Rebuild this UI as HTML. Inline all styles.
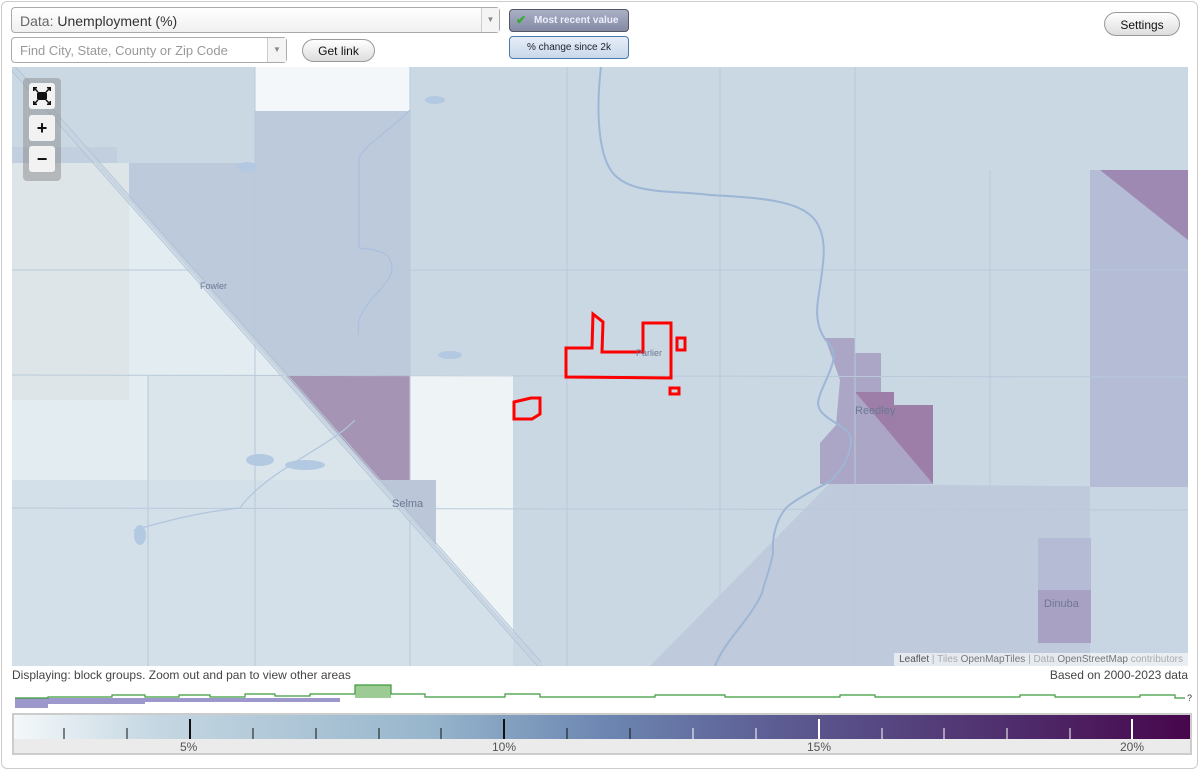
<!DOCTYPE html>
<html><head><meta charset="utf-8"><style>
*{box-sizing:border-box}
body{margin:0;width:1200px;height:771px;background:#fff;font-family:"Liberation Sans",Arial,sans-serif;overflow:hidden}
.frame{position:absolute;left:1px;top:1px;width:1197px;height:768px;border:1px solid #ccc;border-radius:6px}
.sel{position:absolute;left:11px;top:7px;width:489px;height:26px;border:1px solid #aaa;border-radius:4px;background:linear-gradient(#fff,#f0f0f0);font-size:14px;color:#333;padding:5px 8px}
.sel .lab{color:#666}
.arr{position:absolute;right:0;top:0;width:18px;height:100%;border-left:1px solid #ccc;color:#888;font-size:8px;text-align:center;line-height:24px;background:#f4f4f4}
.find{position:absolute;left:11px;top:37px;width:276px;height:26px;border:1px solid #aaa;border-radius:4px;background:#fff;font-size:13px;color:#999;padding:5px 8px}
.btn{position:absolute;border:1px solid #999;border-radius:12px;background:linear-gradient(#fff,#ddd);font-size:12px;color:#111;text-align:center}
.t1{position:absolute;left:509px;top:9px;width:120px;height:23px;border:1px solid #556;border-radius:4px;background:linear-gradient(#aab0c4,#838aa3);color:#eef;font-size:10px;font-weight:bold;padding:5px 0 0 24px}
.t2{position:absolute;left:509px;top:36px;width:120px;height:23px;border:1px solid #4a7ab0;border-radius:4px;background:linear-gradient(#e6eef8,#c9d8ea);color:#223;font-size:10px;text-align:center;padding-top:5px}
.map{position:absolute;left:12px;top:67px;width:1176px;height:599px;overflow:hidden;background:#cad8e4}
.zc{position:absolute;left:11px;top:11px;width:38px;height:103px;background:rgba(140,140,140,.5);border-radius:4px}
.zb{position:absolute;left:6px;width:26px;height:26px;background:#f2f2f2;border-radius:3px;font-weight:bold;text-align:center;font-size:18px;line-height:26px;color:#111}
.attr{position:absolute;right:0;bottom:0;background:rgba(255,255,255,.6);font-size:10px;color:#aaa;padding:1px 5px}
.attr b{color:#777;font-weight:normal}
</style></head><body>
<div class="frame"></div>
<div class="sel"><span class="lab">Data: </span>Unemployment (%)<div class="arr">▼</div></div>
<div class="find">Find City, State, County or Zip Code<div class="arr" style="width:19px">▼</div></div>
<div class="btn" style="left:302px;top:39px;width:73px;height:23px;padding-top:4px">Get link</div>
<div class="t1"><span style="position:absolute;left:6px;top:3px;color:#3a3;font-size:12px">✔</span>Most recent value</div>
<div class="t2">% change since 2k</div>
<div class="btn" style="left:1104px;top:12px;width:76px;height:24px;padding-top:5px">Settings</div>
<div class="map">
<svg width="1176" height="599" viewBox="12 67 1176 599" style="position:absolute;left:0;top:0">
<rect x="12" y="67" width="1176" height="599" fill="#cad8e4"/>
<rect x="12" y="480" width="501" height="186" fill="#d4e0e9"/>
<rect x="255" y="67" width="155" height="44" fill="#f4f7f9"/>
<polygon points="255,111 410,111 410,375 284,375 97,163 255,163" fill="#bdcadc"/>
<rect x="12" y="147" width="105" height="16" fill="#c2cfdf"/>
<polygon points="12,163 97,163 284,375 384,480 12,480" fill="#e3ecf0"/>
<rect x="12" y="163" width="117" height="237" fill="#dde5e8"/>
<rect x="148" y="375" width="140" height="105" fill="#d9e4eb"/>
<polygon points="288,375 384,480 288,480" fill="#d9e4eb"/>
<polygon points="284,375 410,375 410,480 377,480" fill="#a694b5"/>
<polygon points="377,480 436,480 436,545" fill="#bcc6d9"/>
<polygon points="410,375 513,375 513,633 436,545 436,480 410,480" fill="#eef3f6"/>
<polygon points="829,484 1188,487 1188,666 650,666" fill="#bfcbdc"/>
<rect x="1090" y="487" width="98" height="179" fill="#c8d5e2"/>
<rect x="1090" y="170" width="98" height="317" fill="#b4bcd6"/>
<polygon points="1100,170 1188,170 1188,240" fill="#9d89b2"/>
<polygon points="825,338 855,338 855,353 881,353 881,392 855,392 933,484 820,484 820,443 836,425 840,380" fill="#aba5c6"/>
<polygon points="855,392 894,392 894,405 933,405 933,484" fill="#9c7ea8"/>
<rect x="1038" y="538" width="53" height="52" fill="#b6bbd5"/>
<rect x="1038" y="590" width="53" height="53" fill="#a9a1c4"/>
<g stroke="#b9c9da" stroke-width="1" fill="none">
<line x1="12" y1="375" x2="1188" y2="377"/><line x1="567" y1="67" x2="567" y2="666"/>
<line x1="255" y1="67" x2="255" y2="666"/><line x1="410" y1="67" x2="410" y2="666"/>
<line x1="855" y1="67" x2="855" y2="666"/><line x1="12" y1="508" x2="1188" y2="510"/>
<line x1="12" y1="270" x2="1188" y2="270"/><line x1="148" y1="375" x2="148" y2="666"/>
<line x1="990" y1="170" x2="990" y2="666"/><line x1="720" y1="67" x2="720" y2="666"/>
</g>
<g stroke="#c5d4e0" stroke-width="3" fill="none"><line x1="12" y1="67" x2="541" y2="666"/></g>
<g stroke="#b3c4d6" stroke-width="1" fill="none"><line x1="12" y1="63" x2="541" y2="662"/><line x1="12" y1="71" x2="541" y2="670"/></g>
<path d="M601 67 C597 100 596 150 612 172 C630 195 670 190 710 195 C760 198 800 200 815 220 C830 240 822 270 818 300 C815 320 820 335 830 345 C842 360 820 385 818 403 C818 420 851 425 851 440 C850 460 838 475 829 482 C810 492 795 500 787 507 C775 520 772 540 773 553 C770 570 765 580 762 593 C750 620 725 640 715 666" stroke="#9db6d5" stroke-width="2" fill="none"/>
<path d="M410 110 C390 130 365 145 359 158 L359 248 C385 250 392 255 392 270 C390 285 365 300 359 320 L358 335" stroke="#a9c0dc" stroke-width="1.2" fill="none"/>
<path d="M134 530 C170 520 200 512 240 508 C260 480 300 460 330 440 C345 430 350 425 355 420" stroke="#b0c5de" stroke-width="1.2" fill="none"/>
<g fill="#b3c9e2"><ellipse cx="140" cy="535" rx="6" ry="10"/><ellipse cx="260" cy="460" rx="14" ry="6"/><ellipse cx="305" cy="465" rx="20" ry="5"/><ellipse cx="450" cy="355" rx="12" ry="4"/><ellipse cx="435" cy="100" rx="10" ry="4"/><ellipse cx="247" cy="167" rx="10" ry="5"/></g>
<g fill="none" stroke="#f00" stroke-width="3">
<polygon points="566,348 592,348 593,314 603,322 602,352 643,352 643,323 671,323 671,378 566,377"/>
<rect x="677" y="338" width="8" height="12"/>
<rect x="670" y="388" width="9" height="6"/>
<polygon points="514,402 531,398 540,398 540,414 532,419 514,419"/>
</g>
<g font-size="11" fill="#6c7894">
<text x="200" y="289" font-size="9">Fowler</text>
<text x="855" y="414">Reedley</text><text x="392" y="507">Selma</text><text x="1044" y="607">Dinuba</text>
<text x="636" y="356" font-size="9">Parlier</text>
</g>
</svg>
<div class="zc"><div class="zb" style="top:5px"><svg width="26" height="26" viewBox="0 0 26 26"><rect x="8" y="9" width="10" height="8" rx="2" fill="#111"/><g stroke="#111" stroke-width="1.5"><path d="M5 5L9 9M21 5L17 9M5 21L9 17M21 21L17 17"/></g><g fill="#111"><path d="M4 4h4v1.5H5.5V8H4z"/><path d="M22 4h-4v1.5h2.5V8H22z"/><path d="M4 22h4v-1.5H5.5V18H4z"/><path d="M22 22h-4v-1.5h2.5V18H22z"/></g></svg></div><div class="zb" style="top:37px">+</div><div class="zb" style="top:68px">−</div></div>
<div class="attr"><b style="color:#555">Leaflet</b> | Tiles <b>OpenMapTiles</b> | Data <b>OpenStreetMap</b> contributors</div>
</div>
<div style="position:absolute;left:12px;top:668px;font-size:12px;color:#444">Displaying: block groups. Zoom out and pan to view other areas</div>
<div style="position:absolute;right:12px;top:668px;font-size:12px;color:#444">Based on 2000-2023 data</div>
<svg style="position:absolute;left:15px;top:684px" width="1180" height="30">
<path d="M0 14 H33 V24 H0Z M33 14 H130 V20 H33Z M130 14 H325 V18 H130Z" fill="#9c98cc"/>
<rect x="340" y="1" width="36" height="13" fill="#9ccb94"/>
<path d="M0 14 H33 V13 H97 V11 H130 V13 H164 V11 H195 V13 H230 V10 H260 V12 H295 V10 H340 V1 H376 V10 H410 V13 H490 V10 H525 V13 H640 V11 H710 V13 H825 V11 H860 V13 H1005 V11 H1040 V13 H1125 V11 H1160 V14 H1170" stroke="#3a9a3a" stroke-width="1.2" fill="none"/>
<text x="1172" y="17" font-size="9" fill="#333">?</text>
</svg>
<div style="position:absolute;left:12px;top:713px;width:1180px;height:42px;border:2px solid #ccc;background:#ebebeb">
<div style="position:absolute;left:0;top:0;width:1176px;height:24px;background:linear-gradient(90deg,#f4f8fa,#c5d7e2 12%,#98b6cc 35%,#6d87b2 50%,#5c5c93 65%,#4f2d6c 85%,#47064c)"></div>
<svg style="position:absolute;left:0;top:0" width="1176" height="24">
<g stroke="#111" stroke-width="1"><line x1="50" y1="13" x2="50" y2="24"/><line x1="113" y1="13" x2="113" y2="24"/><line x1="239" y1="13" x2="239" y2="24"/><line x1="302" y1="13" x2="302" y2="24"/><line x1="365" y1="13" x2="365" y2="24"/><line x1="427" y1="13" x2="427" y2="24"/><line x1="553" y1="13" x2="553" y2="24"/><line x1="616" y1="13" x2="616" y2="24"/></g>
<g stroke="#111" stroke-width="2"><line x1="176" y1="4" x2="176" y2="24"/><line x1="490" y1="4" x2="490" y2="24"/></g>
<g stroke="#fff" stroke-width="1"><line x1="679" y1="13" x2="679" y2="24"/><line x1="742" y1="13" x2="742" y2="24"/><line x1="868" y1="13" x2="868" y2="24"/><line x1="930" y1="13" x2="930" y2="24"/><line x1="993" y1="13" x2="993" y2="24"/><line x1="1056" y1="13" x2="1056" y2="24"/></g>
<g stroke="#fff" stroke-width="2"><line x1="805" y1="4" x2="805" y2="24"/><line x1="1118" y1="4" x2="1118" y2="24"/></g>
</svg>
<div style="position:absolute;top:25px;left:166px;font-size:12px;color:#555">5%</div>
<div style="position:absolute;top:25px;left:478px;font-size:12px;color:#555">10%</div>
<div style="position:absolute;top:25px;left:793px;font-size:12px;color:#555">15%</div>
<div style="position:absolute;top:25px;left:1106px;font-size:12px;color:#555">20%</div>
</div>
</body></html>
